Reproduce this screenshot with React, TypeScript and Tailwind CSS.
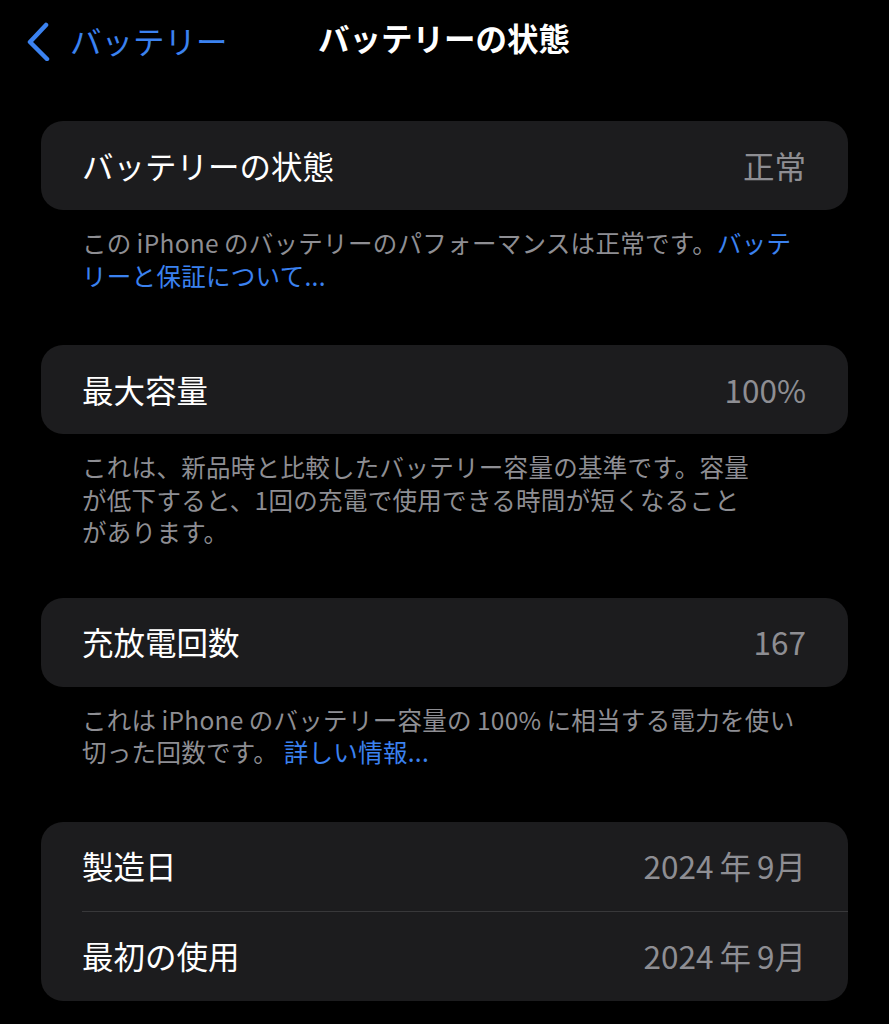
import React from "react";

const font = { fontFamily: '"Noto Sans CJK JP", "Noto Sans", sans-serif' };

function Card({ children }: { children: React.ReactNode }) {
  return <div className="mx-[41px] rounded-[22px] bg-[#1c1c1e]">{children}</div>;
}

function Row({ label, value }: { label: string; value: React.ReactNode }) {
  return (
    <div className="flex h-[89px] items-center justify-between pl-[41px] pr-[42px]">
      <span className="text-[31.5px] text-white">{label}</span>
      <span className="text-[31.5px] text-[#8e8e93]">{value}</span>
    </div>
  );
}

function Footer({ children }: { children: React.ReactNode }) {
  return (
    <div className="ml-[82px] mr-[40px] mt-[17px] text-[24.5px] leading-[32.5px] tracking-[0.3px] text-[#8e8e93] whitespace-nowrap">
      {children}
    </div>
  );
}

function Sp({ children }: { children: React.ReactNode }) {
  return <span className="mx-[5px]">{children}</span>;
}

const date = (
  <>
    2024<span className="mx-[6px]">年</span>9月
  </>
);

export default function App() {
  return (
    <div className="min-h-[1024px] w-full bg-black" style={font}>
      <div className="relative flex h-[81px] items-center">
        <div className="flex items-center pl-[27px] text-[#3b82f0]">
          <svg width="24" height="40" viewBox="0 0 24 40" className="mr-[19px]">
            <path d="M19 4 L3 21 L20 38" fill="none" stroke="#3b82f0" strokeWidth="4.5" strokeLinecap="round" strokeLinejoin="round" />
          </svg>
          <span className="text-[31.5px] leading-none">バッテリー</span>
        </div>
        <div className="absolute left-[318px] top-[22px] text-[31.5px] font-bold leading-none text-white">
          バッテリーの状態
        </div>
      </div>

      <div className="pt-[40px]">
        <Card>
          <Row label="バッテリーの状態" value="正常" />
        </Card>
        <Footer>
          この<Sp>iPhone</Sp>のバッテリーのパフォーマンスは正常です。<span className="text-[#3b82f0]">バッテ</span>
          <br />
          <span className="text-[#3b82f0]">リーと保証について...</span>
        </Footer>

        <div className="h-[53px]" />
        <Card>
          <Row label="最大容量" value="100%" />
        </Card>
        <Footer>
          これは、新品時と比較したバッテリー容量の基準です。容量
          <br />
          が低下すると、1回の充電で使用できる時間が短くなること
          <br />
          があります。
        </Footer>

        <div className="h-[49px]" />
        <Card>
          <Row label="充放電回数" value="167" />
        </Card>
        <Footer>
          これは<Sp>iPhone</Sp>のバッテリー容量の<Sp>100%</Sp>に相当する電力を使い
          <br />
          切った回数です。 <span className="text-[#3b82f0]">詳しい情報...</span>
        </Footer>

        <div className="h-[53px]" />
        <Card>
          <Row label="製造日" value={date} />
          <div className="ml-[41px] h-px bg-[#38383a]" />
          <Row label="最初の使用" value={date} />
        </Card>
      </div>
    </div>
  );
}
